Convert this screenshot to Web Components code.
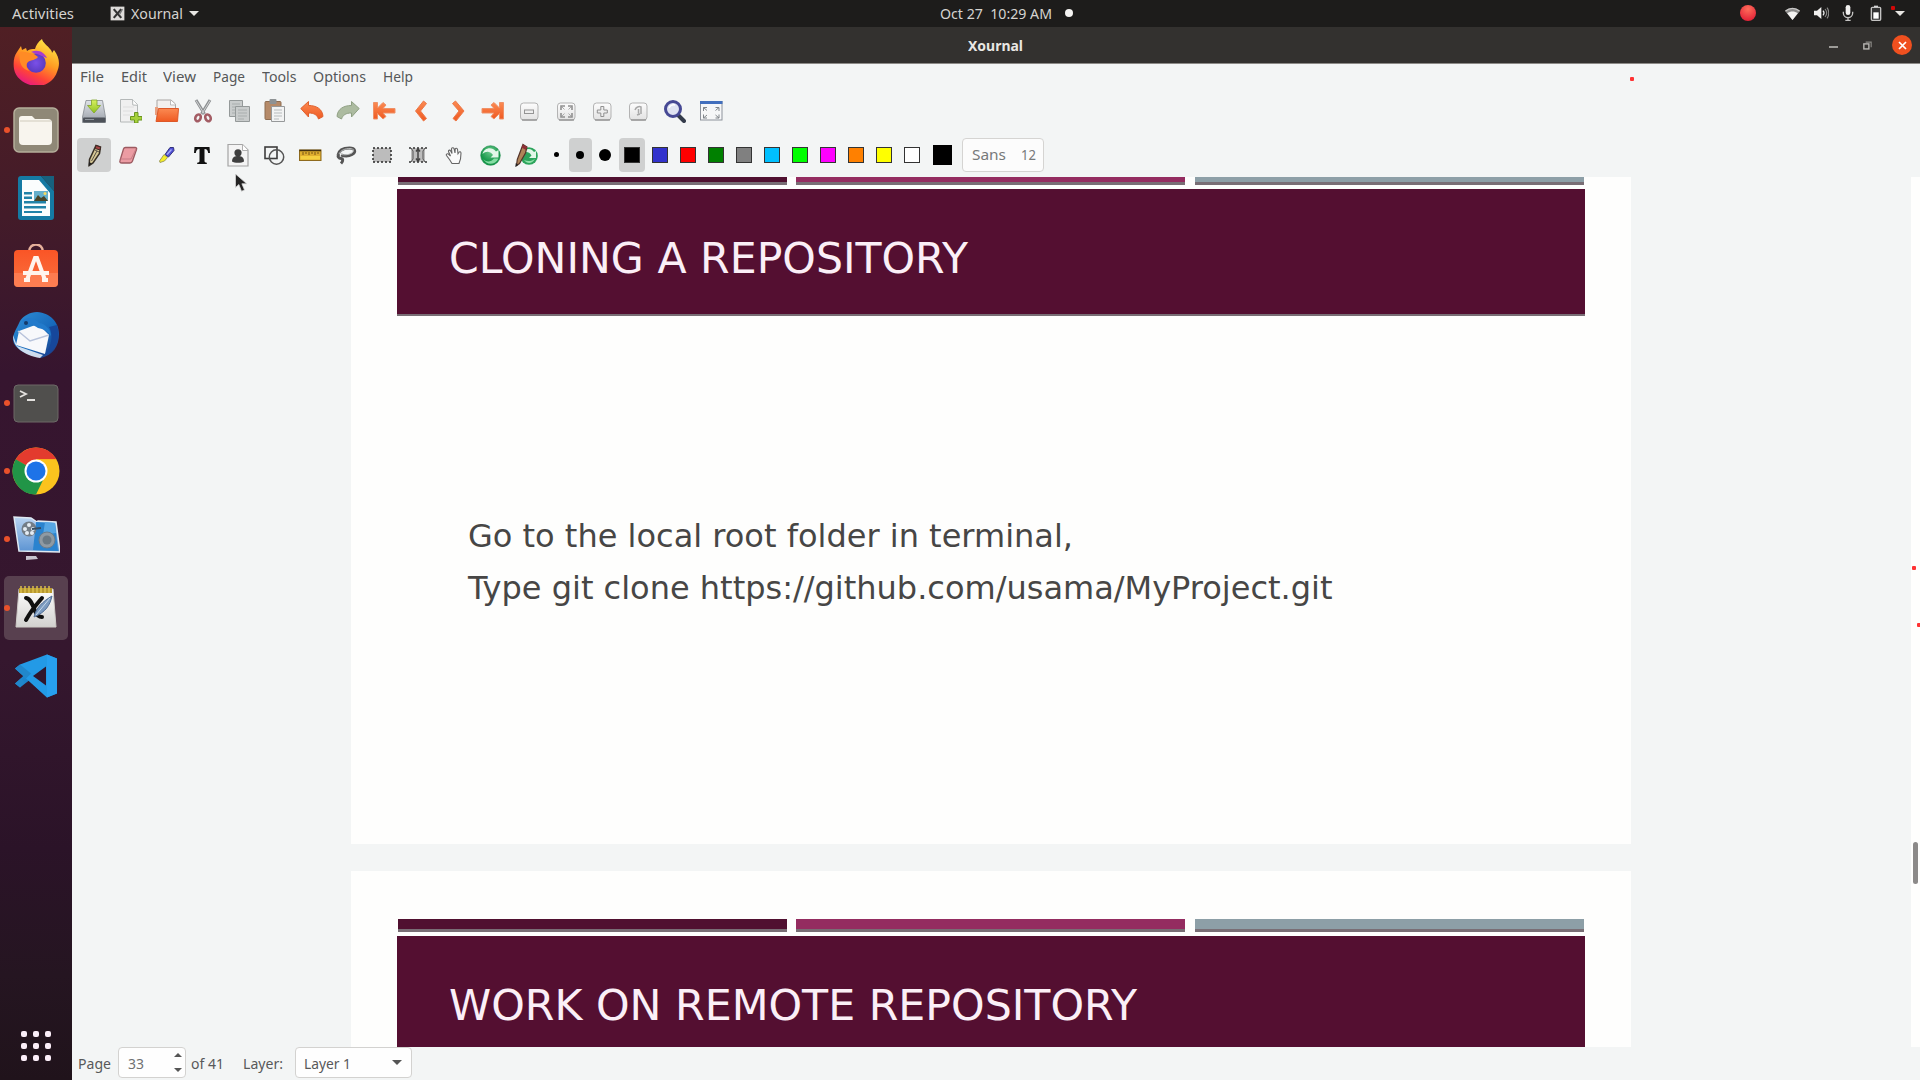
<!DOCTYPE html>
<html lang="en">
<head>
<meta charset="utf-8">
<title>Xournal</title>
<style>
html,body{margin:0;width:1920px;height:1080px;overflow:hidden;background:#f3f5f5}
body{font-family:"Noto Sans","Open Sans",sans-serif}
</style>
</head>
<body>
<x-desktop></x-desktop>
<script>
const G = (id, a, b, v = 1) => `<linearGradient id="${id}" x1="0" y1="0" x2="${v ? 0 : 1}" y2="${v ? 1 : 0}"><stop stop-color="${a}"/><stop offset="1" stop-color="${b}"/></linearGradient>`;
const OR = G('o', '#fb8a52', '#ef5a22');
const key = inner => `<defs>${G('k', '#fdfdfd', '#e2e2e2')}</defs><rect x="3.5" y="4" width="17.5" height="17" rx="3" fill="url(#k)" stroke="#b3b3b3"/><path d="M5 21h15" stroke="#8e8e8e" stroke-width="1.3"/>${inner}`;
const ICONS = {
  save: `<defs>${G('a', '#dfe3e8', '#9aa0a8')}${G('b', '#d8f060', '#8fc31f')}</defs><path d="M4 1.5h16.5L23.500 18v5.500H.5V18z" fill="url(#a)" stroke="#858a90" stroke-width=".8"/><rect x="1" y="18.500" width="22.500" height="5" rx="1" fill="#4d5259"/><path d="M3 20.500h9" stroke="#8f969d"/><path d="M9.500 1h5.500v5.500h3.500L12 14 5.500 6.500h4z" fill="url(#b)" stroke="#7fa329" stroke-width=".8"/>`,
  newdoc: `<path d="M2.500.5h12l5 5v17.500h-17z" fill="#f0f0f0" stroke="#b4b8b8"/><path d="M14.500.5l.3 5.500 4.700.3" fill="#fff" stroke="#b4b8b8"/><path d="M5 8h11M5 12h10M5 16h7" stroke="#dedede"/><path d="M16.500 13.500h3.500v4h4v3.500h-4v3h-3.500v-3h-4v-3.500h4z" fill="#a6d13a" stroke="#6b9521"/>`,
  open: `<defs>${OR}</defs><path d="M2 1h14l4.500 4v15H2z" fill="#f3f0ee" stroke="#a9a5a3"/><path d="M15.500 1v5h5" fill="#fff" stroke="#bbb"/><path d="M0 16V8h3v8z" fill="#e9a080"/><path d="M3.500 9.500h20L22.500 22.500H1z" fill="url(#o)" stroke="#dd5828"/>`,
  cut: `<path d="M5 1l8.500 14M19 1l-8.500 14" stroke="#8d9092" stroke-width="3" fill="none"/><path d="M5 1.500l8 13M19 1.500l-8 13" stroke="#d0d2d3" stroke-width="1"/><g fill="none" stroke="#a35c64" stroke-width="2.600"><ellipse cx="7" cy="18.800" rx="2.600" ry="3.500" transform="rotate(25 7 18.800)"/><ellipse cx="17" cy="18.800" rx="2.600" ry="3.500" transform="rotate(-25 17 18.800)"/></g>`,
  copy: `<g fill="#c9cccc" stroke="#949999"><path d="M2.500 1.500h13v16h-13z"/><path d="M8.500 7.500h14v15h-14z"/></g><path d="M5 5h8M5 8h3M5 11h3M5 14h3M11 11h9M11 14h9M11 17h9M11 20h6" stroke="#a9aeae"/>`,
  paste: `<rect x="2" y="2.500" width="16" height="18" rx="1" fill="#b58a69" stroke="#8d6c51"/><rect x="6.500" y="0" width="7" height="5" rx="1" fill="#8e9294"/><path d="M8.500 7.500h13v15h-13z" fill="#f2f3f3" stroke="#96999a"/><path d="M11 11h8M11 14h8M11 17h8M11 20h5" stroke="#b7bbbc"/>`,
  undo: `<defs>${OR}</defs><path d="M.8 9.500L8.500 2.500v4c8 0 14 3.500 14.500 11l-4.500 2.500c-1.500-4-4-6-10-6v4z" fill="url(#o)" stroke="#df602d"/>`,
  redo: `<path d="M23.200 9.500L15.500 2.500v4c-8 0-14 3.500-14.500 11l4.500 2.500c1.500-4 4-6 10-6v4z" fill="#acbba0" stroke="#8fa083"/>`,
  first: `<defs>${OR}</defs><path d="M1.500 3.500h4v5.500l5.500-5.500 3 2.500-3 3.500H23v4.500H11l3 3.500-3 2.500-5.500-5.500v5.500h-4z" fill="url(#o)" stroke="#ef9167"/>`,
  last: `<defs>${OR}</defs><path d="M22.500 3.500h-4v5.500l-5.500-5.500-3 2.500 3 3.500H1v4.500h12l-3 3.500 3 2.500 5.500-5.500v5.500h4z" fill="url(#o)" stroke="#ef9167"/>`,
  prev: `<defs>${OR}</defs><path d="M14.500 2l3 2.500L11.500 12l6 7.500-3 2.500L6.500 12z" fill="url(#o)" stroke="#ec7a4a"/>`,
  next: `<defs>${OR}</defs><path d="M10.500 2L7.500 4.500l6.500 7.500-6 7.500 3 2.500L19 12z" fill="url(#o)" stroke="#ec7a4a"/>`,
  zout: key(`<rect x="7.500" y="11" width="9" height="3.500" fill="#eee" stroke="#949494"/>`),
  zfit: key(`<path d="M7 11V7h4M14 7h4v4M7 14v4h4M18 14v4h-4" fill="none" stroke="#909090" stroke-width="1.600"/><path d="M8 8l2.500 2.500M17 8l-2.500 2.500M8 17l2.500-2.500M17 17l-2.500-2.500" stroke="#aaa"/>`),
  zin: key(`<path d="M10.800 7.500h3v3.500h3.500v3h-3.500v3.500h-3V14H7.300v-3h3.500z" fill="#eee" stroke="#909090"/>`),
  z100: key(`<path d="M9 11c1-3 4-4 6-3v7M12.500 10v4.500M11 16l3-1" fill="none" stroke="#a8a8a8" stroke-width="1.500"/>`),
  find: `<path d="M16 16l6 6" stroke="#333b4a" stroke-width="4" stroke-linecap="round"/><circle cx="11" cy="10" r="7.500" fill="#dfe3f2" stroke="#464994" stroke-width="3"/><path d="M7 9a5 5 0 0 1 6-3" fill="none" stroke="#fff" stroke-width="1.500"/>`,
  full: `<rect x="1.500" y="2.500" width="21.500" height="18.500" fill="#f6f7f8" stroke="#8e939c"/><path d="M1 2h22.500v3H1z" fill="#426fbd"/><path d="M4.500 12V8.500H8M4.500 8.500l3.500 3M20 12V8.500h-3.500M20 8.500l-3.500 3M4.500 15.500V19H8M4.500 19l3.500-3M20 15.500V19h-3.500M20 19l-3.500-3" fill="none" stroke="#80858a"/>`,
  pencil: `<path d="M14 2.500l4.500 1.500-1 6.500-6.500 9.500-3.800 2.500.3-6z" fill="#d6c794" stroke="#383026" stroke-width="1.500"/><path d="M14 2.500l4.500 1.500-.5 3-4.700-1.500z" fill="#a84444" stroke="#402a25"/><path d="M13 7l4 2M15 8l-5.500 10" stroke="#565048" fill="none"/><path d="M6.500 23l.5-4 2.800 1.500z" fill="#222"/>`,
  eraser: `<path d="M8.500 4.500h9.500c1.500 0 2 1 1.500 2L15.500 18c-.5 1.500-1.500 2-2.500 2H5c-2 0-2.500-1-2-2.500L6.500 6c.3-1 1-1.500 2-1.500z" fill="#eb9ca3" stroke="#9c5a60" stroke-width="1.300"/><path d="M3.500 16h10.500L19 6" fill="none" stroke="#c77d86"/>`,
  highlight: `<path d="M17 4.500h3.500l.5 3-5.500 6.500-3.500-2.500z" fill="#5050d8" stroke="#33337c"/><path d="M18.500 6.500l-4.500 5" stroke="#aab0f6" stroke-width="1.300"/><path d="M11 11.500l3.500 3-3 3.500-4.500 1.500-.5-1.500z" fill="#f5ee29" stroke="#8c8a50" stroke-width=".8"/>`,
  text: `<path d="M4.500 4h15l.5 6h-1.800c-.4-2.800-1.200-4-3.700-4v12c0 1.200.8 1.700 2.300 1.700V21H7.200v-1.300c1.500 0 2.300-.5 2.300-1.700V6C7 6 6.200 7.200 5.800 10H4z" fill="#111"/>`,
  image: `<path d="M2 1.500h14.500l5.500 5.500V23H2z" fill="#f4f4f4" stroke="#a4a4a4" stroke-width="1.200"/><path d="M16.500 1.500v6H22" fill="#fff" stroke="#b0b0b0"/><circle cx="12" cy="9.800" r="3.600" fill="#3f3f3f"/><path d="M6 18.500c0-4.500 3-5.500 6-5.500s6 1 6 5.500c-2 1.700-10 1.700-12 0z" fill="#3f3f3f"/>`,
  shapes: `<rect x="3" y="4" width="12" height="11.500" fill="none" stroke="#3d3d3d" stroke-width="1.600"/><circle cx="14.500" cy="14" r="7.200" fill="none" stroke="#555" stroke-width="1.500"/>`,
  ruler: `<rect x="1.500" y="7" width="21.500" height="10.500" fill="#dfad2e" stroke="#8e6a1d"/><path d="M1.500 7.500h21.500" stroke="#433010" stroke-width="1.500"/><path d="M5 9v3M8 9v2M11 9v3M14 9v2M17 9v3M20 9v2" stroke="#775514"/><rect x="2.500" y="13" width="19.500" height="3.500" fill="#f5cf40"/>`,
  lasso: `<path d="M4 12c1-5 6-7 11.500-7s7 4 2.500 6.500-8 1.500-11 .5M5 11.500c-2 2 0 4 2 4s2.500 2.500 0 5" fill="none" stroke="#555" stroke-width="3"/><path d="M5 11C7 7 11 5.500 16 5.500s4 3.500 1 5-7 1.500-10 1" fill="none" stroke="#c0c3c3" stroke-width=".9"/>`,
  select: `<rect x="3" y="5" width="18" height="14" fill="#bcbcbc"/><rect x="3" y="5" width="18" height="14" fill="none" stroke="#292929" stroke-width="1.500" stroke-dasharray="2 2"/>`,
  vspace: `<rect x="5" y="5" width="14" height="14" fill="#bdbdbd"/><path d="M3 5h18M3 19h18" stroke="#333" stroke-width="1.500" stroke-dasharray="2 2"/><path d="M12 5v14M10 8.500l2-2.500 2 2.500M10 15.500l2 2.500 2-2.500" fill="none" stroke="#444" stroke-width="1.500"/><path d="M5 5l2 3v8l-2 3M19 5l-2 3v8l2 3" fill="none" stroke="#555"/>`,
  hand: `<path d="M10 20.500l-2.500-4-3-4c-.8-1.500 1-2.500 2.500-1l1.500 1.500L6.500 8.500c-.3-1.500 1.500-2 2.200-.5L10 10.500 9.500 6c0-1.500 2-1.500 2.500-.5l1 4.500.2-4c.5-1.200 2-1 2.300.3l.5 4.500 1-1.500c.6-1 2-.5 2 1L18.500 16l-1.500 4.500z" fill="#fafafa" stroke="#666" stroke-width="1.100"/>`,
  recycle: `<defs><radialGradient id="r" cy=".3"><stop stop-color="#6cc98c"/><stop offset="1" stop-color="#17984a"/></radialGradient></defs><circle cx="12.500" cy="12.500" r="9.800" fill="url(#r)" stroke="#178646" stroke-width=".6"/><path d="M4.500 11c1.500-6 9-8 13.500-2.500l2.500-1.500v7.500h-8l2.500-2.500C12 8 8 8 4.500 11z" fill="#e3f7e9"/><path d="M5 15.500c2.500 4 8 4 11 0h4.500c-3 6.500-12 7.500-15.500 0z" fill="#86dda4"/>`,
  penrec: `<circle cx="15" cy="13" r="8.800" fill="#2da45c"/><path d="M9 10c3-5 8-5 11-1l2-1v7h-7l2.500-2.500C15 8.500 12 8.500 9 10z" fill="#e2f7e8"/><path d="M10 17c4 2 8 1 11-1-3 5-8 5-11 1z" fill="#8fe0a8"/><path d="M9 1.500l4 2.500-1.500 6-6 10.500-3 2 .8-6z" fill="#b08458" stroke="#54342a" stroke-width="1.200"/><path d="M9 1.500l4 2.500-1 3-4.500-2.500z" fill="#8f2f35"/><path d="M1.300 24l.5-4 2.500 2z" fill="#222"/>`,
  wifi: `<path d="M12 21L1.500 8.500C7.500 3 16.500 3 22.500 8.500z" fill="#8c8b8a"/><path d="M12 21L4.500 11.800c4.500-3.600 10.500-3.600 15 0z" fill="#f4f3f2"/><path d="M2 8.500c6-5 14-5 20 0" fill="none" stroke="#c9c8c7" stroke-width="1.500"/>`,
  volume: `<path d="M1.500 8.500H6L12.500 3v18L6 15.500H1.500z" fill="#f0efee"/><path d="M15 8.500c1.800 2 1.800 5 0 7" fill="none" stroke="#eee" stroke-width="1.800"/><path d="M18 6c3 3.500 3 8.500 0 12M21 4c3.500 4.500 3.500 11.500 0 16" fill="none" stroke="#8c8b8a" stroke-width="1.600"/>`,
  mic: `<rect x="8.500" y="0" width="7" height="15" rx="3.500" fill="#f2f1f0"/><path d="M5 10v2a7 7 0 0 0 14 0v-2M12 19v4M8 23h8" fill="none" stroke="#c4c3c2" stroke-width="2"/>`,
  battery: `<path d="M9 1h6v3H9z" fill="#ddd"/><rect x="5" y="3.500" width="14" height="19.500" rx="1.500" fill="#333" stroke="#c4c3c2" stroke-width="2"/><rect x="8" y="11" width="8" height="9.500" fill="#fff"/>`,
  restore: `<rect x="4" y="8.500" width="11" height="11" fill="none" stroke="#bab8b5" stroke-width="3"/><path d="M8 4.500h12V16" fill="none" stroke="#8b8986" stroke-width="2.500"/>`,
  appx: `<rect x="1" y="1" width="22" height="22" fill="#dedcda"/><path d="M6 5l12 14M18 5L6 19" stroke="#333" stroke-width="3.500"/><path d="M15 14l5-9" stroke="#777" stroke-width="2"/>`,
  cursor: `<path d="M2 0v18l4.500-4 3.500 9 4-1.700L10.500 13H17z" fill="#242424" stroke="#d9dada" stroke-width="1"/>`,
  firefox: `<defs><linearGradient id="f" x1=".8" y1="0" x2=".3" y2="1"><stop stop-color="#fff04a"/><stop offset=".45" stop-color="#ff9b22"/><stop offset=".75" stop-color="#ff4438"/><stop offset="1" stop-color="#e51686"/></linearGradient><radialGradient id="g"><stop stop-color="#7a50e8"/><stop offset="1" stop-color="#5b3bc0"/></radialGradient></defs><path d="M4 13l4-6 1 4 4-2 1 3c3-2 5-2 8-2 1-4 3-7 7-10 1 4 5 6 8 10 1 1 2 2 2 4l2-3c6 8 6 15 3 22-3 9-11 14-20 14S3 41 1 30C0 23 1 17 4 13z" fill="url(#f)"/><circle cx="23" cy="24" r="9.800" fill="url(#g)"/><path d="M7 13c5-1 8 1 14 2l4 3c-2 3-7 3-10 5-3 3-1 7 2 9-8-1-12-9-10-19z" fill="#ff8b25"/><path d="M18 13c7-3 13 0 16 6l-3-1c-3-2-8-3-13-5z" fill="#a73dcf"/>`,
  files: `<rect x="1" y="1" width="44" height="44" rx="5" fill="#8f8877" stroke="#b5ae9b" stroke-width="1.500"/><path d="M6 12a3 3 0 0 1 3-3h10l3 3h13a4 4 0 0 1 4 4v18a4 4 0 0 1-4 4H10a4 4 0 0 1-4-4z" fill="#f8f5ee"/><path d="M7 14h31" stroke="#ded9cc" stroke-width="1.500"/>`,
  writer: `<path d="M8 1h20l13 15v26a3 3 0 0 1-3 3H8a3 3 0 0 1-3-3V4a3 3 0 0 1 3-3z" fill="#157aa3"/><path d="M9 5h17l11 13v23H9z" fill="#fbfdfd"/><path d="M28 1h13v9z" fill="#075070"/><path d="M28 1h13v15z" fill="#17617e"/><g fill="#2283a8"><path d="M11 17h8v2.500h-8zM11 21.500h8V24h-8zM11 26h22v2.500H11zM11 31h22v2.500H11zM11 36h18v2H11z"/></g><rect x="21" y="16" width="14" height="10" fill="#65b0cc"/><path d="M21 26l4-6 3 3 3-2 4 5z" fill="#4a4427"/><circle cx="32" cy="18.500" r="1.500" fill="#f5d861"/>`,
  software: `<defs>${G('s', '#fa5526', '#f9703f')}</defs><path d="M16 8c0-10 14-10 14 0" fill="none" stroke="#e6b19b" stroke-width="2.500"/><rect x="1" y="6" width="44" height="37" rx="4" fill="url(#s)"/><path d="M1 29h44v10a4 4 0 0 1-4 4H5a4 4 0 0 1-4-4z" fill="#ff8860" opacity=".6"/><path d="M14 36l8-22h2l8 22M10 29h26M11 36h6M29 36h6" fill="none" stroke="#fff4ed" stroke-width="4"/>`,
  thunderbird: `<defs><linearGradient id="t" x1="0" y1="0" x2="1" y2="1"><stop stop-color="#2f8fd5"/><stop offset=".6" stop-color="#1667ba"/><stop offset="1" stop-color="#223177"/></linearGradient></defs><path d="M8 10c3-5 10-9 17-9 14 1 22 11 22 22 0 12-6 21-18 24C14 44 2 38 1 29c0-7 4-12 7-19z" fill="url(#t)"/><path d="M7 20l19-7 11 11-4 19-29-9z" fill="#f7f8fb"/><path d="M6 20l12 10 19-6" fill="none" stroke="#b8c3db" stroke-width="1.500"/><path d="M1 24l4 11 26 9-3 3C12 44 1 37 1 24z" fill="#eef3f9" opacity=".85"/><path d="M10 10c6-5 12-3 17 2 7 1 12 7 12 13-4-5-7-7-13-8-5-4-10-3-16-7z" fill="#227acb"/><circle cx="14" cy="12" r="2" fill="#153a6a"/><path d="M37 16c5 8 2 22-5 28 12-3 17-17 13-30z" fill="#16479b"/>`,
  terminal: `<rect x="1" y="5" width="44" height="37" rx="4" fill="#504f4d" stroke="#6c6967"/><path d="M7 11l6 3-6 3M14 20h8" fill="none" stroke="#e4e2df" stroke-width="1.800"/>`,
  chrome: `<circle cx="24" cy="24" r="23.500" fill="#fbc31e"/><path d="M24 24L3.600 12.500A23.500 23.500 0 0 1 44.500 12.300H24z" fill="#e33b2e"/><path d="M3.700 12.200L24 24l9 5-9 18.500A23.500 23.500 0 0 1 3.700 12.200z" fill="#219547"/><path d="M24 12.500h20.500L36 24z" fill="#fbc31e"/><circle cx="24" cy="24" r="11.500" fill="#fff"/><circle cx="24" cy="24" r="9.500" fill="#1d73e8"/>`,
  video: `<defs>${G('v', '#b9d4f2', '#5b93d2')}</defs><path d="M2 2l5 34 41 1-4-30-18-1-1 1-6-4z" fill="url(#v)" stroke="#dfe9f2" stroke-width="1.500"/><path d="M24 7l19 1 3 28-25-1z" fill="#2a83cf"/><path d="M33 7l10 1 1 10-13 2z" fill="#56a6e4"/><circle cx="17" cy="14" r="7.500" fill="#737d87"/><g fill="#e5edf4"><circle cx="17" cy="10" r="2"/><circle cx="13" cy="14" r="2"/><circle cx="21" cy="14" r="2"/><circle cx="15" cy="18" r="2"/><circle cx="20" cy="18" r="2"/></g><path d="M20 14l9-1" stroke="#334d65" stroke-width="2"/><circle cx="35" cy="25" r="8" fill="#8f9aa3" stroke="#6b7d8c"/><circle cx="35" cy="25" r="4.500" fill="#6a7984"/><path d="M14 41h10l2 3-12 1z" fill="#c8c3ce"/>`,
  xournal: `<defs>${G('x', '#fefefe', '#d2d1cf')}</defs><path d="M6 4h34l3 38H3z" fill="url(#x)" stroke="#cfcdc9"/><path d="M6 3h33v5H6z" fill="#b8982f"/><path d="M8 1v7M12 1v7M16 1v7M20 1v7M24 1v7M28 1v7M32 1v7M36 1v7" stroke="#d9bd4e" stroke-width="1.500"/><path d="M13 13c5 1 7 8 9 13 2 5 4 6 7 6M29 13c-5 6-10 11-16 22" fill="none" stroke="#101010" stroke-width="4" stroke-linecap="round"/><path d="M21 32c2-9 8-15 18-21-2 9-6 16-18 21z" fill="#7c9bc0" stroke="#526f97"/><path d="M23 30l14-17" stroke="#c5d7e9"/>`,
  vscode: `<path d="M34 1.500l10 4v35l-10 4L16 27.500 7 34.500l-5-4 32-29z" fill="#1b84cd"/><path d="M34 1.500v43L2 15.500l5-4z" fill="#239ae6"/><path d="M33 13.500v19L20 23z" fill="#30162c"/><path d="M2 15.500l5-4 11 9-5 5zM2 30.500l6-5 4 4-5 5z" fill="#2187cb"/><path d="M34 1.500l10 4v35l-10 4z" fill="#27a0ef"/>`
};

const define = (name, html, setup) => customElements.define(name, class extends HTMLElement {
  constructor() {
    super();
    this.attachShadow({ mode: 'open' });
  }
  connectedCallback() {
    this.shadowRoot.innerHTML = typeof html === 'function' ? html(this) : html;
    if (setup) setup(this, this.shadowRoot);
  }
});

/* Scalable pictogram: name, size, and viewBox edge */
define('x-icon', el => `<style>:host{display:block;flex:none;line-height:0}</style><svg width="${el.getAttribute('size') || 24}" height="${el.getAttribute('size') || 24}" viewBox="0 0 ${el.getAttribute('box') || 24} ${el.getAttribute('box') || 24}">${ICONS[el.getAttribute('name')]}</svg>`);

/* Text run condensed or expanded to an exact advance width */
define('x-label', el => `<style>:host{display:block;flex:none;width:${el.getAttribute('w')}px;white-space:pre}span{display:inline-block;transform-origin:0 50%}</style><span>${el.getAttribute('text')}</span>`,
  (el, root) => {
    const s = root.querySelector('span');
    const n = s.offsetWidth;
    if (n) s.style.transform = `scaleX(${+el.getAttribute('w') / s.getBoundingClientRect().width})`;
  });

define('x-topbar', `<style>
:host{display:flex;height:27px;background:#1d1c1b;color:#d5d3d0;font-size:15px;line-height:26px;align-items:center;box-sizing:border-box;padding-bottom:1px}
.l{display:flex;align-items:center;width:940px;padding-left:12px;box-sizing:border-box}
.app{margin:0 6px 0 36px}
.caret{border:5px solid transparent;border-top:5px solid #e8e6e3;border-bottom:0;margin-left:6px}
.dot{width:8px;height:8px;border-radius:50%;background:#f5f4f2;margin:0 667px 0 13px}
.rec{width:16px;height:16px;border-radius:50%;background:radial-gradient(circle at 50% 25%,#ff6d5a,#dd1230);margin-right:28px}
.tray{display:flex;gap:11.700px;align-items:center}.tray .caret{margin-left:-1px;margin-top:1px}
</style><div class="l"><x-label w="62" text="Activities"></x-label><x-icon class="app" size="15" name="appx"></x-icon><x-label w="52" text="Xournal"></x-label><i class="caret"></i></div>
<x-label w="112" text="Oct 27  10:29 AM"></x-label><i class="dot"></i><i class="rec"></i>
<div class="tray"><x-icon size="17" name="wifi"></x-icon><x-icon size="16" name="volume"></x-icon><x-icon size="16" name="mic"></x-icon><x-icon size="16" name="battery"></x-icon><i class="caret"></i></div>`);

define('x-titlebar', `<style>
:host{display:grid;grid-template-columns:896px 1fr auto;align-items:center;height:37px;background:#33312f;border-bottom:1px solid #8c8a87;box-sizing:border-box;color:#e9e7e4;font-size:15px;font-weight:700;line-height:36px;padding-right:8px}
.c{display:flex;align-items:center}
.min{width:9px;height:2px;background:#9d9b98;margin:3px 24px 0 0}
.close{width:20px;height:20px;border-radius:50%;background:#f0501f;margin-left:19px;display:flex}
.close svg{margin:auto}
</style><span></span><x-label w="55" text="Xournal"></x-label><div class="c"><i class="min"></i><x-icon size="11" name="restore"></x-icon><div class="close"><svg width="9" height="9" viewBox="0 0 9 9"><path d="M1 1l7 7M8 1L1 8" stroke="#fff" stroke-width="1.700"/></svg></div></div>`);

define('x-dock-item', el => `<style>
:host{display:flex;align-items:center;justify-content:center;height:64px;margin:0 4px 4.200px;border-radius:5px;position:relative;flex:none}
:host([active]){background:#58404f}
.run{position:absolute;left:0;top:29px;width:6px;height:6px;border-radius:50%;background:#e9512b}
</style>${el.hasAttribute('running') ? '<i class="run"></i>' : ''}<x-icon name="${el.getAttribute('name')}" size="${el.getAttribute('size') || 46}" box="${el.getAttribute('box') || 46}"></x-icon>`);

define('x-dock', `<style>
:host{display:flex;flex-direction:column;width:72px;flex:none;box-sizing:border-box;padding-top:3px;background:linear-gradient(180deg,#501f24 0,#431b29 18%,#36152f 33%,#35172e 60%,#2b1328 78%,#251521 90%,#20131b 100%)}
.apps{margin:auto auto 19px;display:grid;grid-template-columns:repeat(3,6px);gap:6px}
.apps i{width:6px;height:6px;border-radius:2px;background:#fbeef8}
</style><x-dock-item name="firefox"></x-dock-item><x-dock-item name="files" running></x-dock-item><x-dock-item name="writer"></x-dock-item><x-dock-item name="software"></x-dock-item><x-dock-item name="thunderbird" size="48" box="48"></x-dock-item><x-dock-item name="terminal" running></x-dock-item><x-dock-item name="chrome" running size="48" box="48"></x-dock-item><x-dock-item name="video" running size="48" box="48"></x-dock-item><x-dock-item name="xournal" running active></x-dock-item><x-dock-item name="vscode"></x-dock-item><div class="apps">${'<i></i>'.repeat(9)}</div>`);

define('x-menubar', `<style>:host{display:flex;gap:16.700px;height:27px;padding-left:8px;font-size:15px;line-height:25px;color:#555758}</style>` +
  [['File', 24], ['Edit', 26], ['View', 33], ['Page', 32], ['Tools', 34.5], ['Options', 53], ['Help', 30]].map(([t, w]) => `<x-label w="${w}" text="${t}"></x-label>`).join(''));

const cell = (n, w) => `<div class="cell" style="width:${w}px"><x-icon name="${n}"></x-icon></div>`;
define('x-toolbars', `<style>
:host{display:block;height:86px}
.row{display:flex;align-items:center;padding-left:4px;height:40px}
.row+.row{height:47px}
.cell{display:flex;justify-content:center;align-items:center;flex:none;height:34px}
.on{background:#cfd0d0;border-radius:4px}
.b{border-radius:50%;background:#000}
.sw{width:16px;height:16px;box-sizing:border-box;border:1.500px solid #333}
.font{display:flex;box-sizing:border-box;height:34px;width:82px;margin-left:2px;padding:0 7px 0 9px;justify-content:space-between;border:1px solid #d5d4d2;border-radius:4px;background:#fcfcfc;color:#77797a;font-size:15px;line-height:31px}
.first{margin-left:1px;margin-right:.4px}
</style>
<div class="row">${['save', 'newdoc', 'open', 'cut', 'copy', 'paste', 'undo', 'redo', 'first', 'prev', 'next', 'last', 'zout', 'zfit', 'zin', 'z100', 'find', 'full'].map(n => cell(n, 36.27)).join('')}</div>
<div class="row"><div class="cell on first" style="width:34px"><x-icon name="pencil"></x-icon></div>${['eraser', 'highlight', 'text', 'image', 'shapes', 'ruler', 'lasso', 'select', 'vspace', 'hand', 'recycle', 'penrec'].map(n => cell(n, 36.05)).join('')}
<div class="cell" style="width:25px"><i class="b" style="width:5px;height:5px"></i></div><div class="cell on" style="width:23px"><i class="b" style="width:8px;height:8px"></i></div><div class="cell" style="width:26px"><i class="b" style="width:12px;height:12px"></i></div>
<div class="cell on" style="width:26px;margin:0 1px"><i class="sw" style="background:#000"></i></div>
${['#3333cc', '#ff0000', '#008000', '#808080', '#00c0ff', '#00ff00', '#ff00ff', '#ff8000', '#ffff00', '#ffffff'].map(c => `<div class="cell" style="width:28px"><i class="sw" style="background:${c}"></i></div>`).join('')}
<div class="cell" style="width:34px"><i style="width:19px;height:20px;background:#000"></i></div>
<div class="font"><x-label w="34" text="Sans"></x-label><x-label w="15" text="12"></x-label></div></div>`);

/* One presentation page */
define('x-slide', el => `<style>
:host{display:block;width:1280px;height:720px;flex:none;background:#fefefd;box-sizing:border-box;padding:48px 46px 0;font-family:"DejaVu Sans",sans-serif}
.bars{display:grid;grid-template-columns:389px 389px 389px;gap:9.800px;height:12.500px;margin-bottom:4.500px;padding-left:.5px}
.bars i{box-sizing:border-box;border-bottom:3px solid #796e75}
.bars i:nth-child(1){background:#501030}.bars i:nth-child(2){background:#942c60}.bars i:nth-child(3){background:#8d9fa7}
.head{height:127px;width:1187.500px;background:#540f31;color:#fbeff7;font-size:42.700px;line-height:50px;padding:44px 0 0 52px;box-sizing:border-box;border-bottom:2px solid #796e75}
.body{padding:194px 0 0 71px;font-size:32px;line-height:52px;color:#474645}
</style><div class="bars"><i></i><i></i><i></i></div><div class="head"><x-label w="${el.getAttribute('w')}" text="${el.getAttribute('heading')}"></x-label></div><div class="body"><slot></slot></div>`);

define('x-canvas', `<style>
:host{display:flex;flex:1;min-height:0;overflow:hidden;justify-content:space-between;padding-left:279px}
.pages{display:flex;flex-direction:column;gap:27px;margin-top:-53px}
.bar{width:9px;background:#fefefd;padding:665px 0 0 2px;box-sizing:border-box}
.bar i{display:block;width:5px;height:42px;border-radius:3px;background:#8c8a89}
</style><div class="pages"><x-slide heading="CLONING A REPOSITORY" w="519"><x-label w="605" text="Go to the local root folder in terminal,"></x-label><x-label w="864.5" text="Type git clone https://github.com/usama/MyProject.git"></x-label></x-slide><x-slide heading="WORK ON REMOTE REPOSITORY" w="688"></x-slide></div><div class="bar"><i></i></div>`);

define('x-statusbar', `<style>
:host{display:flex;height:33px;box-sizing:border-box;padding:0 0 2px 6px;align-items:center;font-size:15px;line-height:28px;color:#58595a}
.box{display:flex;align-items:center;box-sizing:border-box;height:31px;border:1px solid #d3d2d0;border-radius:4px;background:#fefefe}
.spin{width:68px;margin:0 5px 0 7px;padding-left:9px;padding-right:3px;justify-content:space-between;color:#707172}
.sel{width:117px;margin-left:12px;padding:0 9px 0 8px;justify-content:space-between}
.ar{display:flex;flex-direction:column;gap:11px}
.u,.d{border:4px solid transparent}.u{border-top:0;border-bottom:4px solid #555}.d{border-bottom:0;border-top:4px solid #555}
.sel .d{border-width:5px 5px 0}
</style><x-label w="33" text="Page"></x-label><div class="box spin"><x-label w="16" text="33"></x-label><div class="ar"><i class="u"></i><i class="d"></i></div></div><x-label w="33" text="of 41"></x-label><x-label style="margin-left:19px" w="40" text="Layer:"></x-label><div class="box sel"><x-label w="47" text="Layer 1"></x-label><i class="d"></i></div>`);

define('x-desktop', `<style>
:host{display:flex;flex-direction:column;width:1920px;height:1080px;position:relative;overflow:hidden;background:#f3f5f5}
.main{display:flex;flex:1;min-height:0}
.win{display:flex;flex-direction:column;flex:1;min-width:0}
.cursor,.mark{position:absolute}.cursor{left:234px;top:174px}
.mark{width:4px;height:4px;border-radius:1px;background:#ff3334}
</style><x-topbar></x-topbar><div class="main"><x-dock></x-dock><div class="win"><x-titlebar></x-titlebar><x-menubar></x-menubar><x-toolbars></x-toolbars><x-canvas></x-canvas><x-statusbar></x-statusbar></div></div>
<x-icon class="cursor" name="cursor" size="18"></x-icon>
<i class="mark" style="left:1891px;top:6px;background:#d00808"></i><i class="mark" style="left:1630px;top:77px"></i><i class="mark" style="left:1912px;top:566px"></i><i class="mark" style="left:1917px;top:623px"></i>`);
</script>
</body>
</html>
